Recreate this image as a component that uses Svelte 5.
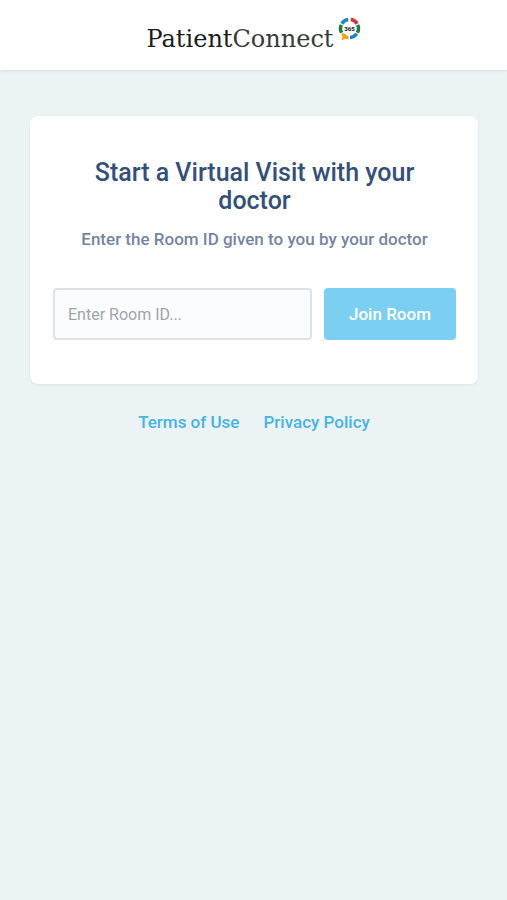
<script>
	let roomId = '';

	function joinRoom() {
		roomId = roomId.trim();
	}
</script>

<header class="header">
	<a class="logo" href="/" aria-label="PatientConnect 365">
		<span class="name"><span class="strong">Patient</span>Connect</span>
		<svg class="badge" viewBox="0 0 46 48" aria-hidden="true">
			<g fill="none" stroke-width="7">
				<path stroke="#1d86c8" d="M7.7 13.5A18 18 0 0 1 20.500 5.200" />
				<path stroke="#e0313a" d="M25.5 5.2A18 18 0 0 1 38.300 13.500" />
				<path stroke="#15803f" d="M39.4 15.7A18 18 0 0 1 38.900 31.500" />
				<path stroke="#1d86c8" d="M37.6 33.6A18 18 0 0 1 24 41" />
				<path stroke="#15803f" d="M6.6 15.7A18 18 0 0 0 7.100 31.500" />
			</g>
			<path fill="#f9a01b" d="M6 34L11 32Q15 37 21 38V45Q17 44 15 43L7 47L9 40Z" />
			<text x="23" y="27" text-anchor="middle">365</text>
		</svg>
	</a>
</header>

<main class="page">
	<section class="card">
		<h1>Start a Virtual Visit with your doctor</h1>
		<p id="room-hint">Enter the Room ID given to you by your doctor</p>
		<form on:submit|preventDefault={joinRoom}>
			<input
				type="text"
				name="room"
				placeholder="Enter Room ID..."
				aria-label="Room ID"
				aria-describedby="room-hint"
				autocomplete="off"
				bind:value={roomId}
			/>
			<button type="submit">Join Room</button>
		</form>
	</section>

	<nav class="links" aria-label="Legal">
		<a href="/terms">Terms of Use</a>
		<a href="/privacy">Privacy Policy</a>
	</nav>
</main>

<style>
	:global(body) {
		background-color: #ebf3f5;
		font-family: Roboto, 'Liberation Sans', sans-serif;
	}

	.header {
		display: flex;
		justify-content: center;
		align-items: center;
		height: 70px;
		background-color: #fff;
		box-shadow: 0 1px 2px rgba(40, 90, 110, 0.12);
	}

	.logo {
		display: flex;
		align-items: flex-start;
		gap: 4px;
		color: #3a393b;
		text-decoration: none;
	}

	.name {
		padding-top: 8px;
		font-family: 'DejaVu Serif', serif;
		font-size: 24px;
		font-weight: 400;
		line-height: 28px;
	}

	.strong {
		color: #1c1b1d;
	}

	.badge {
		width: 23px;
		height: 24px;
	}

	.badge text {
		fill: #2b2a2c;
		font-family: Roboto, sans-serif;
		font-size: 12px;
		font-weight: 900;
	}

	.page {
		padding: 46px 29px 30px 30px;
	}

	.card {
		padding: 43px 22px 44px 23px;
		background-color: #fff;
		border-radius: 8px;
		box-shadow: 0 1px 3px rgba(40, 70, 90, 0.08);
		text-align: center;
	}

	h1 {
		margin: 0 0 12px;
		padding: 0 24px;
		color: #34507a;
		font-size: 25px;
		font-weight: 500;
		line-height: 28px;
	}

	p {
		margin: 0 0 37px;
		color: #74869f;
		font-size: 17px;
		font-weight: 500;
		line-height: 24px;
	}

	form {
		display: flex;
		gap: 12px;
	}

	input,
	button {
		box-sizing: border-box;
		height: 52px;
		border-radius: 4px;
		font-family: inherit;
	}

	input {
		flex: 1;
		min-width: 0;
		padding: 0 13px;
		border: 2px solid #e0e2e7;
		background-color: #fbfcfe;
		color: #34507a;
		font-size: 16px;
	}

	input::placeholder {
		color: #a1a4ad;
		opacity: 1;
	}

	button {
		flex: none;
		width: 132px;
		border: 0;
		background-color: #7bcff1;
		color: #fff;
		font-size: 17px;
		font-weight: 500;
		cursor: pointer;
	}

	.links {
		display: flex;
		justify-content: center;
		gap: 24px;
		padding-top: 26px;
	}

	.links a {
		color: #48b4e4;
		font-size: 17px;
		font-weight: 500;
		line-height: 24px;
		text-decoration: none;
	}
</style>
